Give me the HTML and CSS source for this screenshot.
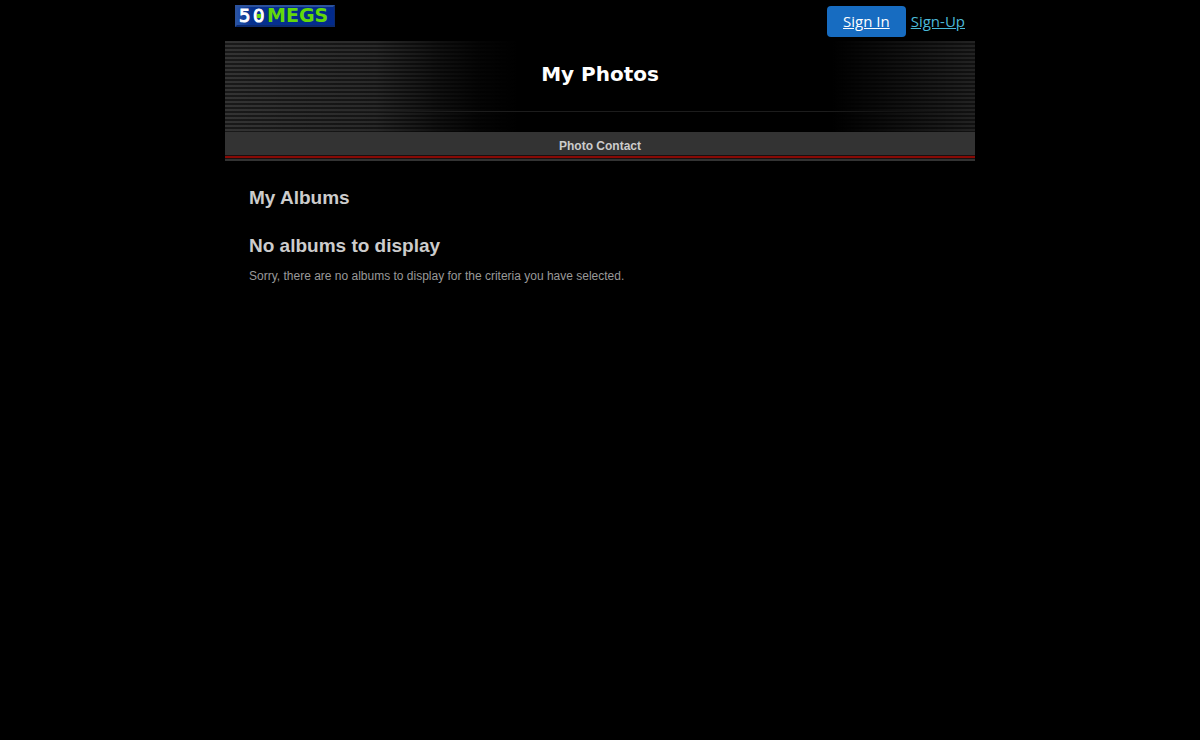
FILE: index.html
```html
<!DOCTYPE html>
<html lang="en">
<head>
<meta charset="utf-8">
<meta name="viewport" content="width=device-width, initial-scale=1">
<title>My Photos</title>
<link rel="stylesheet" href="styles.css">
</head>
<body>
<div class="page">
  <header class="topbar">
    <a class="logo" href="#" aria-label="50Megs home">
      <svg width="100" height="22" viewBox="0 0 100 22">
        <defs>
          <linearGradient id="plate" x1="0" y1="0" x2="1" y2="0">
            <stop offset="0" stop-color="#2552a8"/>
            <stop offset="0.15" stop-color="#06318f"/>
            <stop offset="1" stop-color="#022a8c"/>
          </linearGradient>
        </defs>
        <rect width="100" height="22" fill="#0b2a70"/>
        <path d="M0 0H100L98 2H2V20L0 22Z" fill="#2c529c"/>
        <rect x="2" y="2" width="97" height="18" fill="url(#plate)"/>
        <text class="logo-number" x="4 18" y="17">50</text>
        <rect x="22" y="9" width="4" height="4" fill="#63d80a"/>
        <text class="logo-word" x="32" y="17">MEGS</text>
      </svg>
    </a>
    <nav class="account">
      <a class="sign-in" href="#">Sign In</a>
      <a class="sign-up" href="#">Sign-Up</a>
    </nav>
  </header>
  <div class="banner">
    <h1 class="title">My Photos</h1>
  </div>
  <nav class="menu"><a class="menu-link" href="#">Photo Contact</a></nav>
  <main class="content">
    <h2 class="heading">My Albums</h2>
    <h2 class="heading">No albums to display</h2>
    <p class="message">Sorry, there are no albums to display for the criteria you have selected.</p>
  </main>
</div>
</body>
</html>
```
FILE: styles.css
```css
* { box-sizing: border-box; }

body {
  margin: 0;
  background: #000;
  color: #999;
  font: 12px/16px "Liberation Sans", Arial, sans-serif;
}

.page {
  max-width: 750px;
  margin: 0 auto;
}

.topbar {
  display: flex;
  justify-content: space-between;
  align-items: flex-start;
  padding: 5px 10px 4px;
}

.logo svg { display: block; }

.logo-number,
.logo-word {
  font-family: "DejaVu Sans", sans-serif;
}

.logo-number {
  font-size: 18px;
  fill: #fff;
  stroke: #fff;
  stroke-width: 1px;
}

.logo-word {
  font-size: 19px;
  fill: #63d80a;
  font-weight: bold;
}

.account {
  display: flex;
  align-items: center;
  gap: 5px;
  padding-top: 1px;
  font: 15px/21px "Open Sans", sans-serif;
}

.sign-in {
  padding: 5px 16px;
  border-radius: 4px;
  background: #176cc1;
  color: #fff;
}

.sign-up { color: #4bb9d8; }

.banner {
  padding: 20px 24px 45px;
  background:
    linear-gradient(90deg, transparent, #1c1c1c 30%, #1c1c1c 80%, transparent) 0 70px / 100% 1px no-repeat,
    linear-gradient(90deg, rgba(0, 0, 0, 0), rgba(0, 0, 0, 0.2) 20%, rgba(0, 0, 0, 0.65) 28%, rgba(0, 0, 0, 0.9) 34%, #000 39%, #000 81%, rgba(0, 0, 0, 0.32)),
    repeating-linear-gradient(#333 0, #333 2px, #191919 2px, #191919 4px);
}

.title {
  margin: 0;
  color: #fff;
  font: bold 20px/26px "DejaVu Sans", Verdana, sans-serif;
  text-align: center;
}

.menu {
  padding: 6px 0 7px;
  background: linear-gradient(#333 23px, #1b1010 23px, #1b1010 24px, #880a05 24px, #880a05 26px, #1b1010 26px, #1b1010 27px, #333 27px);
  text-align: center;
}

.menu-link {
  color: #ccc;
  font-weight: bold;
  text-decoration: none;
}

.content { padding: 25px 24px; }

.heading {
  margin: 0 0 24px;
  color: #ccc;
  font-size: 19px;
  line-height: 24px;
}

.message { margin: -14px 0 0; }
```
